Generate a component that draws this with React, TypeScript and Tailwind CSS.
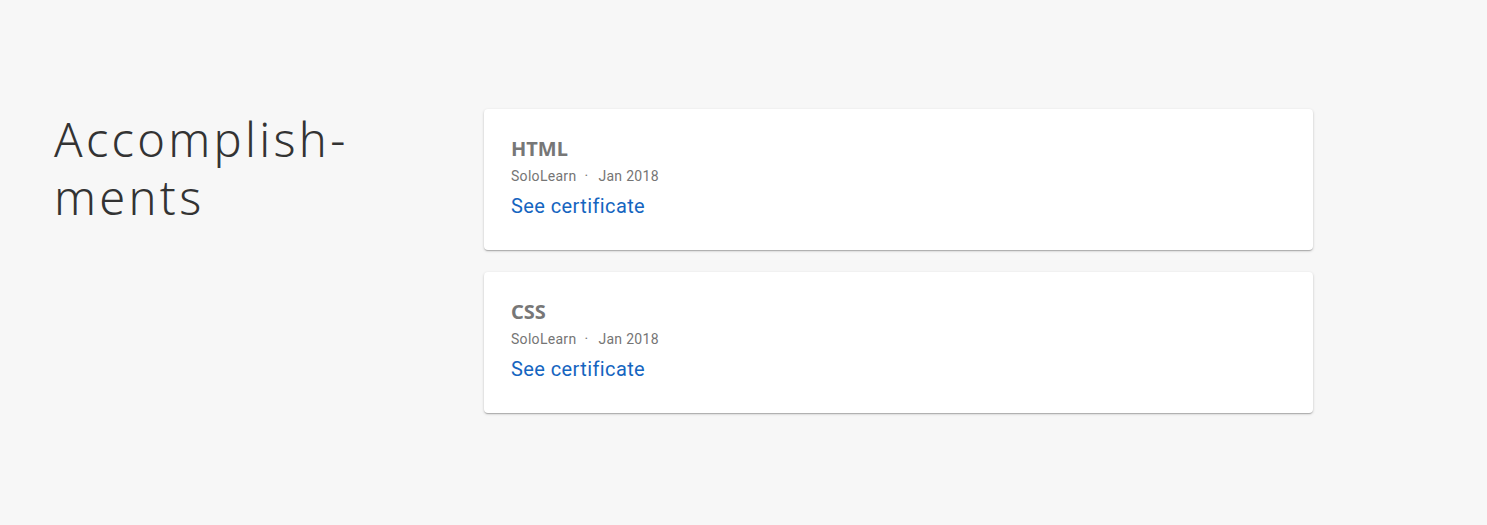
const items = [
  { title: "HTML", issuer: "SoloLearn", date: "Jan 2018" },
  { title: "CSS", issuer: "SoloLearn", date: "Jan 2018" },
];

export default function App() {
  return (
    <div className="min-h-[525px] w-full bg-[#f7f7f7] font-['Roboto',sans-serif]">
      <div className="flex pl-[54px] pt-[109px]">
        <h2 className="w-[430px] shrink-0 pt-[1px] font-['Noto_Sans',sans-serif] text-[47px] font-light leading-[58px] tracking-[3.3px] text-[#333]">
          Accomplish-
          <br />
          ments
        </h2>
        <div className="flex w-[829px] flex-col gap-[22px]">
          {items.map((item) => (
            <div
              key={item.title}
              className="h-[141px] rounded-[4px] bg-white px-[27px] pt-[28px] shadow-[0_1px_3px_rgba(0,0,0,0.18),0_1px_1px_rgba(0,0,0,0.12),0_2px_1px_-1px_rgba(0,0,0,0.1)]"
            >
              <h3 className="font-['Noto_Sans',sans-serif] text-[20px] font-bold leading-[24px] text-[#777]">
                {item.title}
              </h3>
              <p className="mt-[5px] text-[14px] leading-[20px] tracking-[0.3px] text-[#757575]">
                {item.issuer}
                <span className="ml-[8px] mr-[10px]">·</span>
                {item.date}
              </p>
              <a
                href="#"
                className="mt-[6px] block text-[20px] leading-[28px] tracking-[0.4px] text-[#1565c0]"
              >
                See certificate
              </a>
            </div>
          ))}
        </div>
      </div>
    </div>
  );
}
